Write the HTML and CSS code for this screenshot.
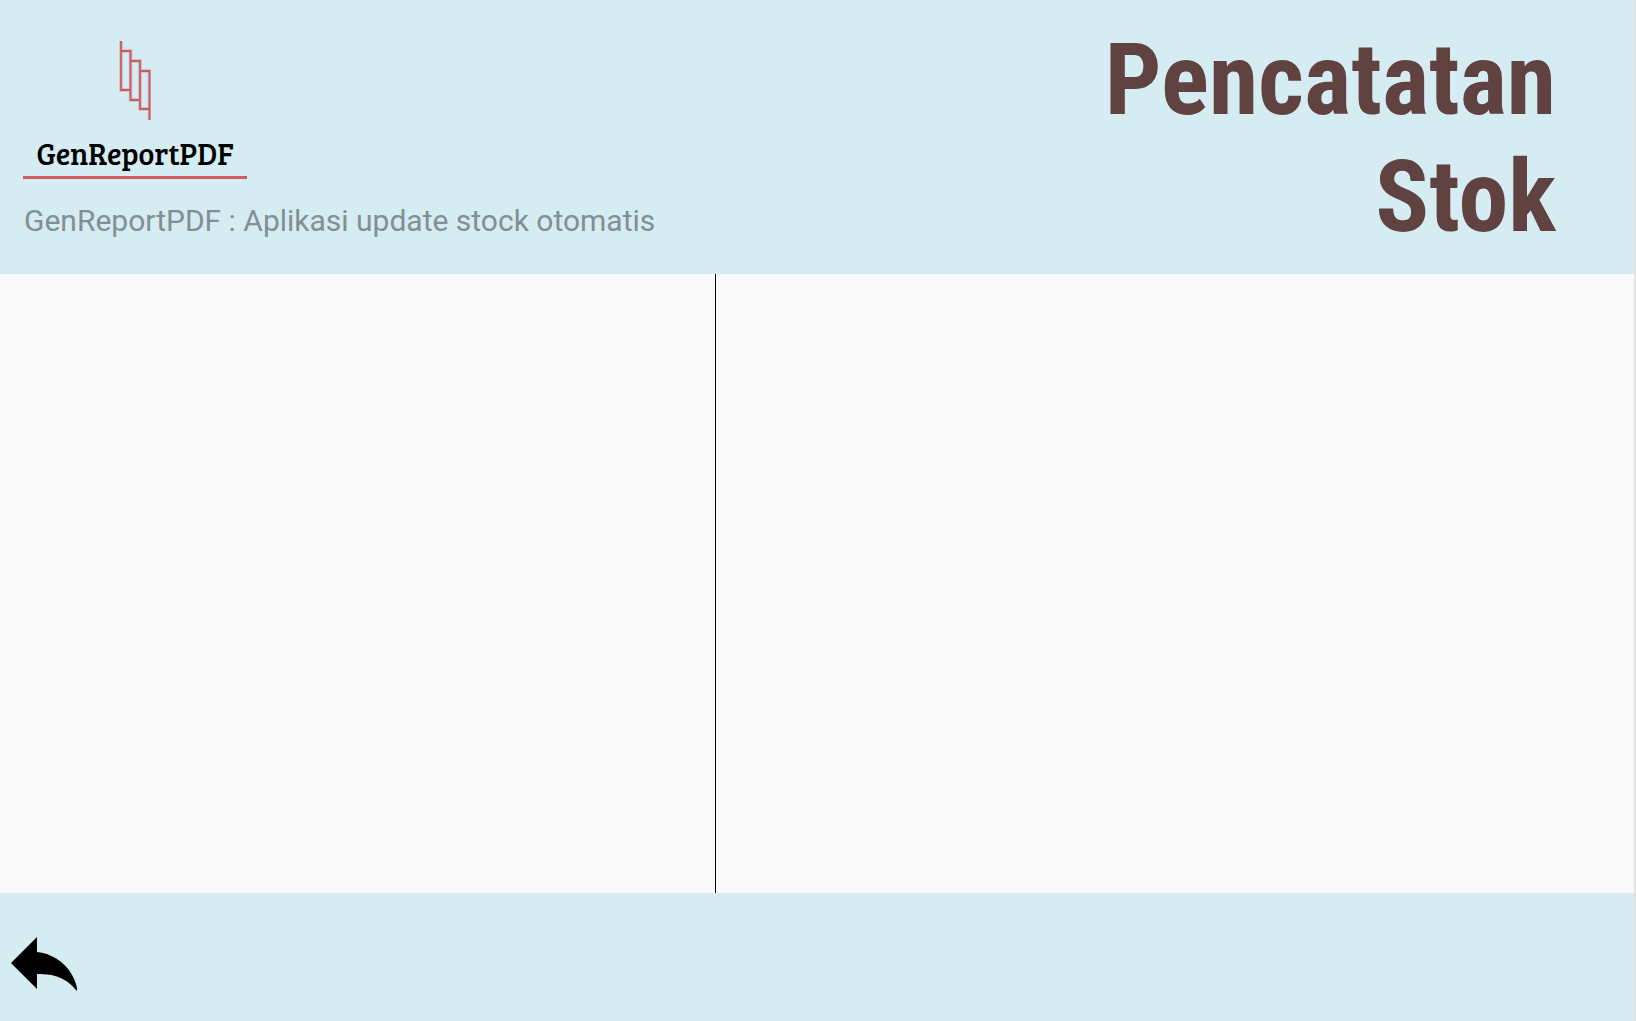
FILE: index.html
```html
<!DOCTYPE html>
<html lang="id">
<head>
<meta charset="utf-8">
<meta name="viewport" content="width=device-width, initial-scale=1">
<title>Pencatatan Stok</title>
<link rel="stylesheet" href="styles.css">
</head>
<body>
<div class="app">
  <header class="header">
    <div class="brand">
      <div class="logo">
        <svg class="logo-mark" width="32" height="80" viewBox="0 0 32 80" fill="none" stroke="#cb5d60" aria-hidden="true">
          <path stroke-width="3.500" opacity=".35" d="M2 0V49H11M2 10H11.500V59H21M11.500 20H21V68H30M21 30H30.500V79"/>
          <path stroke-width="1.800" d="M2 0V49H11M2 10H11.500V59H21M11.500 20H21V68H30M21 30H30.500V79"/>
        </svg>
        <span class="logo-name">GenReportPDF</span>
      </div>
      <p class="tagline">GenReportPDF : Aplikasi update stock otomatis</p>
    </div>
    <h1 class="title">Pencatatan<br>Stok</h1>
  </header>
  <main class="content">
    <section class="panel panel-left" aria-label="Input"></section>
    <section class="panel panel-right" aria-label="Data"></section>
  </main>
  <footer class="footer">
    <button class="back" type="button" aria-label="Kembali">
      <svg width="68" height="56" viewBox="0 0 68 56" aria-hidden="true">
        <path d="M0 26L26 0V15C45 17 62 31 66 51V54C55 41 45 37 26 37V52Z"/>
      </svg>
    </button>
  </footer>
</div>
</body>
</html>
```
FILE: styles.css
```css
* {
  box-sizing: border-box;
}

body {
  margin: 0;
  background: #e2e2e2;
  font-family: Roboto, "Liberation Sans", sans-serif;
}

.app {
  display: flex;
  flex-direction: column;
  min-height: 100vh;
  margin-right: 2px;
  background: #fafafa;
}

.header {
  display: flex;
  justify-content: space-between;
  padding: 21px 78px 19px 23px;
  background: #d5ecf2;
}

.brand {
  display: flex;
  flex-direction: column;
  align-items: flex-start;
  padding-top: 20px;
}

.logo {
  display: flex;
  flex-direction: column;
  align-items: center;
  gap: 12px;
  width: 224px;
  border-bottom: 3px solid #cb5d60;
}

.logo-name {
  height: 43px;
  color: #000;
  font: 30px/40px "Bree Serif", "Liberation Serif", serif;
}

.tagline {
  margin: 24px 0 0;
  padding-left: 1px;
  color: #829093;
  font-size: 30px;
  line-height: 36px;
}

.title {
  margin: 0;
  color: #604241;
  font: bold 100px/117px "Roboto Condensed", Roboto, sans-serif;
  text-align: right;
}

.content {
  display: flex;
  flex: 1;
}

.panel-left {
  width: 43.8%;
  border-right: 1px solid #000;
}

.panel-right {
  flex: 1;
}

.footer {
  padding: 44px 11px 28px;
  background: #d5ecf2;
}

.back {
  display: block;
  padding: 0;
  border: 0;
  background: none;
  cursor: pointer;
}

.back svg {
  display: block;
}
```
